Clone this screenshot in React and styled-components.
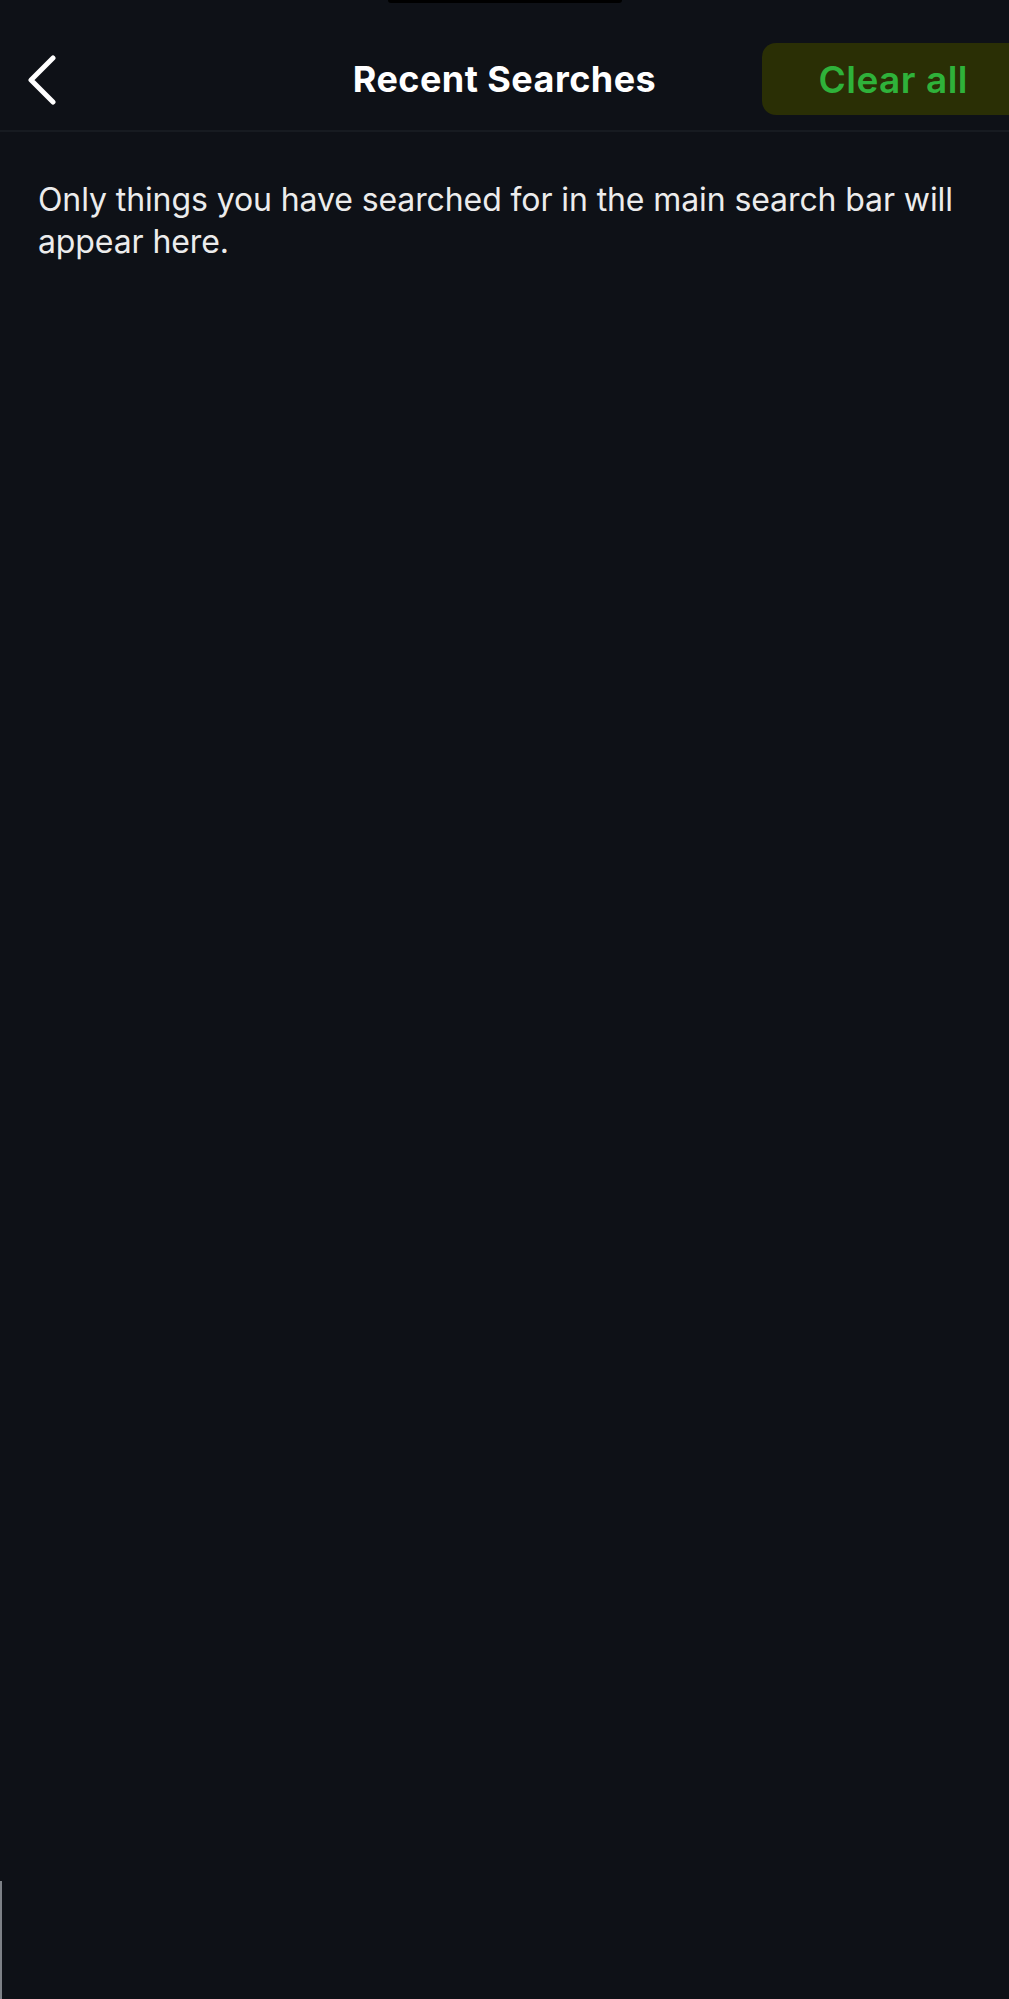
import React from 'react';
import styled, { createGlobalStyle } from 'styled-components';

const GlobalStyle = createGlobalStyle`
  html, body {
    margin: 0;
    padding: 0;
    background: #0e1117;
  }
  * {
    box-sizing: border-box;
  }
`;

const Screen = styled.div`
  width: 1009px;
  min-height: 1999px;
  display: flex;
  flex-direction: column;
  background: #0e1117;
  font-family: Inter, "Noto Sans", "Liberation Sans", sans-serif;
  overflow: hidden;
`;

const Notch = styled.div`
  width: 234px;
  height: 3px;
  margin: 0 auto;
  background: #000000;
  border-radius: 0 0 4px 4px;
`;

const Header = styled.header`
  display: grid;
  grid-template-columns: 1fr auto 1fr;
  align-items: center;
  height: 129px;
  padding-top: 25px;
  border-bottom: 2px solid #171b21;
`;

const BackButton = styled.button`
  justify-self: start;
  display: flex;
  align-items: center;
  margin-left: 25px;
  padding: 0;
  border: 0;
  background: none;
  cursor: pointer;
`;

const Title = styled.h1`
  margin: 0;
  font-size: 36px;
  font-weight: 700;
  color: #ffffff;
  letter-spacing: 0.45px;
`;

const ClearButton = styled.button`
  justify-self: end;
  height: 72px;
  width: 247px;
  padding: 0 41px 0 0;
  display: flex;
  align-items: center;
  justify-content: flex-end;
  border: 0;
  border-radius: 14px 0 0 14px;
  background: #2a2f05;
  color: #2fb23a;
  font-family: Inter, "Noto Sans", "Liberation Sans", sans-serif;
  font-size: 37px;
  font-weight: 600;
  letter-spacing: 0.5px;
  cursor: pointer;
`;

const Message = styled.p`
  margin: 0;
  padding: 47px 30px 0 38px;
  font-size: 32px;
  line-height: 42px;
  letter-spacing: -0.1px;
  color: #ececec;
`;

const Filler = styled.div`
  flex: 1;
`;

const BottomEdge = styled.div`
  height: 118px;
  border-left: 2px solid #7d8187;
`;

function BackIcon() {
  return (
    <svg width="34" height="52" viewBox="0 0 34 52" fill="none">
      <path
        d="M28 5 L6 27 L28 49"
        stroke="#ffffff"
        strokeWidth="5"
        strokeLinecap="round"
        strokeLinejoin="round"
      />
    </svg>
  );
}

export default function App() {
  return (
    <>
      <GlobalStyle />
      <Screen>
        <Notch />
        <Header>
          <BackButton aria-label="Back">
            <BackIcon />
          </BackButton>
          <Title>Recent Searches</Title>
          <ClearButton>Clear all</ClearButton>
        </Header>
        <Message>
          Only things you have searched for in the main search bar will appear here.
        </Message>
        <Filler />
        <BottomEdge />
      </Screen>
    </>
  );
}
